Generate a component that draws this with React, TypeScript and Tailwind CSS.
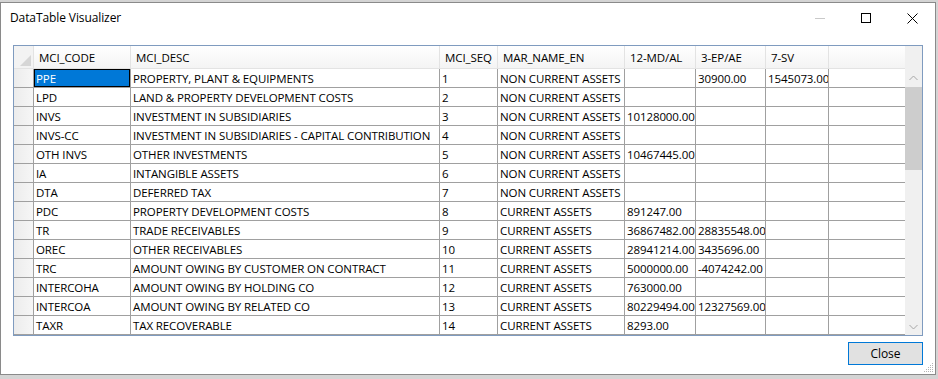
import React from "react";

type Col = { label: string; w: string };

const COLS: Col[] = [
  { label: "MCI_CODE", w: "w-[97px]" },
  { label: "MCI_DESC", w: "w-[309px]" },
  { label: "MCI_SEQ", w: "w-[58px]" },
  { label: "MAR_NAME_EN", w: "w-[127px]" },
  { label: "12-MD/AL", w: "w-[71px]" },
  { label: "3-EP/AE", w: "w-[70px]" },
  { label: "7-SV", w: "w-[63px]" },
];

const ROWS: string[][] = [
  ["PPE", "PROPERTY, PLANT & EQUIPMENTS", "1", "NON CURRENT ASSETS", "", "30900.00", "1545073.00"],
  ["LPD", "LAND & PROPERTY DEVELOPMENT COSTS", "2", "NON CURRENT ASSETS", "", "", ""],
  ["INVS", "INVESTMENT IN SUBSIDIARIES", "3", "NON CURRENT ASSETS", "10128000.00", "", ""],
  ["INVS-CC", "INVESTMENT IN SUBSIDIARIES - CAPITAL CONTRIBUTION", "4", "NON CURRENT ASSETS", "", "", ""],
  ["OTH INVS", "OTHER INVESTMENTS", "5", "NON CURRENT ASSETS", "10467445.00", "", ""],
  ["IA", "INTANGIBLE ASSETS", "6", "NON CURRENT ASSETS", "", "", ""],
  ["DTA", "DEFERRED TAX", "7", "NON CURRENT ASSETS", "", "", ""],
  ["PDC", "PROPERTY DEVELOPMENT COSTS", "8", "CURRENT ASSETS", "891247.00", "", ""],
  ["TR", "TRADE RECEIVABLES", "9", "CURRENT ASSETS", "36867482.00", "28835548.00", ""],
  ["OREC", "OTHER RECEIVABLES", "10", "CURRENT ASSETS", "28941214.00", "3435696.00", ""],
  ["TRC", "AMOUNT OWING BY CUSTOMER ON CONTRACT", "11", "CURRENT ASSETS", "5000000.00", "-4074242.00", ""],
  ["INTERCOHA", "AMOUNT OWING BY HOLDING CO", "12", "CURRENT ASSETS", "763000.00", "", ""],
  ["INTERCOA", "AMOUNT OWING BY RELATED CO", "13", "CURRENT ASSETS", "80229494.00", "12327569.00", ""],
  ["TAXR", "TAX RECOVERABLE", "14", "CURRENT ASSETS", "8293.00", "", ""],
];

function Chevron({ down }: { down?: boolean }) {
  return (
    <svg width="9" height="6" viewBox="0 0 9 6" className={down ? "rotate-180" : ""}>
      <path d="M0.5 5L4.5 1L8.5 5" fill="none" stroke="#a6a6a6" strokeWidth="1" />
    </svg>
  );
}

function HeaderRow() {
  return (
    <div className="flex h-[23px] border-b border-[#e3e3e3] bg-linear-to-b from-white to-[#f4f4f4]">
      {/* corner cell */}
      <div className="w-[20px] shrink-0 border-r border-[#e3e3e3] flex items-end justify-end pr-[2px] pb-[2px] bg-[#f3f3f3]">
        <svg width="11" height="11" viewBox="0 0 11 11">
          <path d="M11 0L11 11L0 11Z" fill="#d6d6d6" />
        </svg>
      </div>
      {COLS.map((c) => (
        <div
          key={c.label}
          className={`${c.w} shrink-0 border-r border-[#e3e3e3] pl-[5px] pt-px leading-[22px] whitespace-nowrap overflow-hidden`}
        >
          {c.label}
        </div>
      ))}
      <div className="w-[76px] shrink-0" />
    </div>
  );
}

function DataRow({ cells, selected }: { cells: string[]; selected?: boolean }) {
  return (
    <div className="flex h-[19px]">
      <div className="w-[20px] shrink-0 border-r border-b border-[#a0a0a0] bg-linear-to-r from-[#ececec] to-[#f6f6f6]" />
      {COLS.map((c, i) => {
        const sel = selected && i === 0;
        return (
          <div
            key={c.label}
            className={`${c.w} shrink-0 border-r border-b border-[#a0a0a0] pl-[2px] pt-px leading-[17px] whitespace-nowrap overflow-hidden ${
              sel ? "bg-[#0078d7] text-white shadow-[inset_0_0_0_1px_#000]" : ""
            }`}
          >
            {cells[i]}
          </div>
        );
      })}
      <div className="w-[76px] shrink-0 border-b border-[#a0a0a0]" />
    </div>
  );
}

export default function App() {
  return (
    <div className="w-[938px] h-[379px] overflow-hidden bg-[#d4d4d4] pt-[2px] font-['Open_Sans',sans-serif] text-[11.5px] tracking-[-0.1px] text-black">
      <div className="relative w-[936px] h-[373px] border border-[#8a8a8a] bg-white flex flex-col">
        {/* title bar */}
        <div className="flex h-[30px] items-center shrink-0">
          <div className="pl-[9px] text-[12px]">DataTable Visualizer</div>
          <div className="flex-1" />
          <div className="w-[46px] h-[30px] flex items-center justify-center">
            <div className="w-[10px] h-px bg-[#c9c9c9]" />
          </div>
          <div className="w-[46px] h-[30px] flex items-center justify-center">
            <div className="w-[10px] h-[10px] border border-black" />
          </div>
          <div className="w-[46px] h-[30px] flex items-center justify-center">
            <svg width="11" height="11" viewBox="0 0 11 11">
              <path d="M0.5 0.5L10.5 10.5M10.5 0.5L0.5 10.5" stroke="#000" strokeWidth="1" />
            </svg>
          </div>
        </div>

        {/* grid */}
        <div className="ml-[12px] mt-[12px] w-[910px] h-[291px] border border-[#7f9bbf] flex">
          <div className="w-[891px] shrink-0 flex flex-col">
            <HeaderRow />
            {ROWS.map((r, i) => (
              <DataRow key={r[0]} cells={r} selected={i === 0} />
            ))}
          </div>
          {/* vertical scrollbar */}
          <div className="w-[17px] shrink-0 flex flex-col bg-[#f0f0f0]">
            <div className="h-[23px] shrink-0" />
            <div className="h-[17px] shrink-0 flex items-center justify-center">
              <Chevron />
            </div>
            <div className="h-[83px] shrink-0 mt-px bg-[#cdcdcd]" />
            <div className="flex-1" />
            <div className="h-[17px] shrink-0 flex items-center justify-center">
              <Chevron down />
            </div>
          </div>
        </div>

        {/* buttons */}
        <div className="ml-[12px] w-[910px] mt-[6px] flex justify-end">
          <button className="w-[75px] h-[23px] border border-[#0078d7] bg-[#e1e1e1] leading-[20px] text-[12px] text-black">
            Close
          </button>
        </div>

        {/* size grip */}
        <svg className="absolute right-[1px] bottom-[1px]" width="10" height="10" viewBox="0 0 10 10">
          {[
            [8, 0],
            [6, 2],
            [8, 2],
            [4, 4],
            [6, 4],
            [8, 4],
            [2, 6],
            [4, 6],
            [6, 6],
            [8, 6],
            [0, 8],
            [2, 8],
            [4, 8],
            [6, 8],
            [8, 8],
          ].map(([x, y]) => (
            <rect key={`${x}-${y}`} x={x} y={y} width="1" height="1" fill="#b4b4b4" />
          ))}
        </svg>
      </div>
    </div>
  );
}
